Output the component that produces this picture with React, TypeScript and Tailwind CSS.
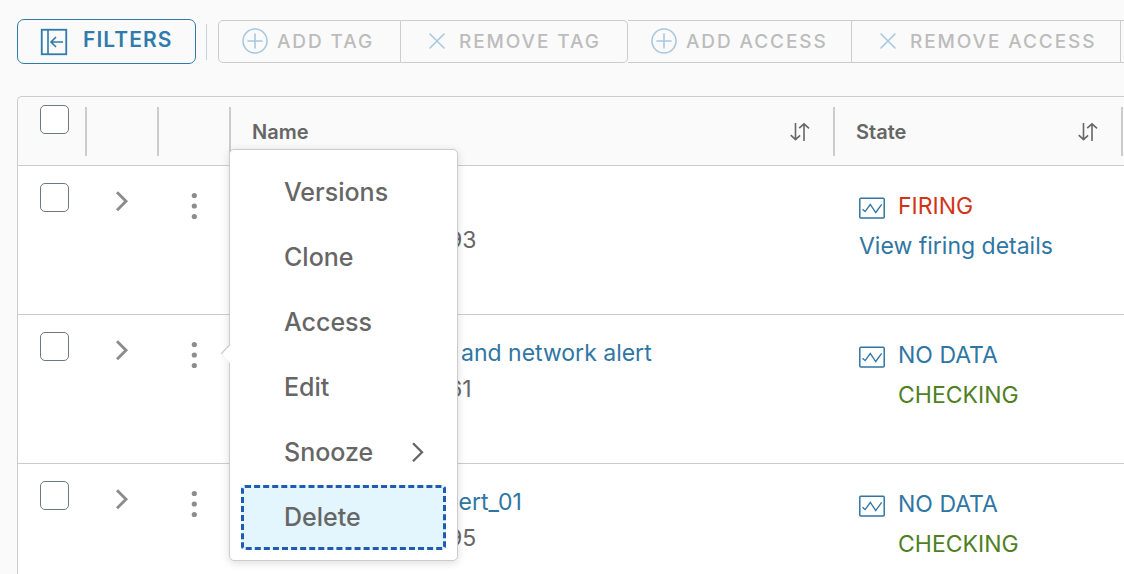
import { useState } from "react";
import type { ReactNode } from "react";

function PanelIcon() {
  return (
    <svg width="28" height="28" viewBox="0 0 28 28" fill="none" stroke="#2f7bab" aria-hidden="true">
      <rect x="1.75" y="1.75" width="24.5" height="24.5" strokeWidth="1.8" />
      <path d="M8 2v24" strokeWidth="1.6" />
      <path d="M16 9L11 14l5 5M11 14h12" strokeWidth="1.6" />
    </svg>
  );
}

function PlusCircleIcon() {
  return (
    <svg width="27" height="27" viewBox="0 0 27 27" fill="none" stroke="#a9c8df" strokeWidth="1.6" aria-hidden="true">
      <circle cx="13" cy="13" r="12" />
      <path d="M13 6v14M6 13h14" strokeLinecap="round" />
    </svg>
  );
}

function CrossIcon() {
  return (
    <svg width="27" height="27" viewBox="0 0 27 27" fill="none" stroke="#a9c8df" strokeWidth="1.6" aria-hidden="true">
      <path d="M6 6l14 14M20 6L6 20" strokeLinecap="round" />
    </svg>
  );
}

function SortIcon() {
  return (
    <svg width="20" height="20" viewBox="0 0 20 20" fill="none" stroke="#666" strokeWidth="1.6" aria-hidden="true">
      <path d="M5.5 1v17M0.8 13.2L5.5 17.6l4.6-4.2M14 19V2M9.2 6.2L14 1.8l5 4.6" />
    </svg>
  );
}

function ChevronIcon({ color, weight }: { color: string; weight: number }) {
  return (
    <svg width="14" height="22" viewBox="0 0 14 22" fill="none" stroke={color} strokeWidth={weight} aria-hidden="true">
      <path d="M2 2.2l9 9-9 9" />
    </svg>
  );
}

function KebabIcon() {
  return (
    <svg width="6" height="28" viewBox="0 0 6 28" fill="#8c8c8c" aria-hidden="true">
      <circle cx="3.3" cy="3.5" r="2.6" />
      <circle cx="3.3" cy="14" r="2.6" />
      <circle cx="3.3" cy="24.5" r="2.6" />
    </svg>
  );
}

function ChartIcon() {
  return (
    <svg width="26" height="22" viewBox="0 0 26 22" fill="none" stroke="#2f76a3" aria-hidden="true">
      <rect x="0.8" y="1.3" width="24.4" height="19.6" rx="1" strokeWidth="1.5" />
      <path d="M3.5 12.2l2.6 2.4 5.2-7.1 5.4 8 6-8.2" strokeWidth="1.3" />
    </svg>
  );
}

function ToolButton({ icon, label, className }: { icon: ReactNode; label: string; className: string }) {
  return (
    <button
      type="button"
      disabled
      className={`flex h-[43px] shrink-0 items-center border-[#ccc] pl-[23px] text-[19px] font-medium tracking-widest text-[#bcbcbc] ${className}`}
    >
      {icon}
      <span className="ml-2 pt-0.5 whitespace-nowrap">{label}</span>
    </button>
  );
}

function Check({ label }: { label: string }) {
  return (
    <input
      type="checkbox"
      aria-label={label}
      className="block size-[29px] appearance-none rounded-[5px] border border-[#6b7a82] bg-white checked:bg-[#2f7bab]"
    />
  );
}

function RowMenu() {
  const items = ["Versions", "Clone", "Access", "Edit", "Snooze", "Delete"];
  return (
    <div
      role="menu"
      className="absolute -top-[166px] left-[70px] z-10 w-[229px] rounded-[5px] border border-[#ccc] bg-white px-[11px] py-[10px] shadow-[0_2px_8px_rgba(0,0,0,0.14)]"
    >
      <svg className="absolute top-[194px] -left-[10px]" width="11" height="20" viewBox="0 0 11 20" aria-hidden="true">
        <path d="M11 0L1 10l10 10z" fill="#fff" />
        <path d="M10 0.5L1 10" stroke="#ccc" strokeWidth="1.2" />
        <path d="M1 10l9 9" stroke="#eee" strokeWidth="0.8" />
      </svg>
      {items.map((item) => (
        <button
          key={item}
          type="button"
          role="menuitem"
          className={`flex h-[65px] w-full items-center justify-between rounded-[4px] border-[3px] pr-[18px] pb-0.5 pl-10 text-[25px] font-medium text-[#666] ${
            item === "Delete" ? "border-dashed border-[#1f5bb5] bg-[#e3f6fe]" : "border-transparent"
          }`}
        >
          {item}
          {item === "Snooze" && <ChevronIcon color="#666" weight={2.3} />}
        </button>
      ))}
    </div>
  );
}

type Alert = { name?: string; nameIndent?: string; id: string; firing: boolean; menu: boolean };

const alerts: Alert[] = [
  { id: "93", firing: true, menu: false },
  { name: "and network alert", nameIndent: "pl-[230px]", id: "61", firing: false, menu: true },
  { name: "alert_01", nameIndent: "pl-[209px]", id: "95", firing: false, menu: false },
];

export default function App() {
  const [openRow] = useState(1);
  return (
    <div className="min-h-screen overflow-hidden bg-[#fafafa] pl-[17px] font-['Inter','Liberation_Sans',sans-serif] text-[#666]">
      <div className="flex items-center pt-[19px]">
        <button
          type="button"
          className="flex h-[45px] w-[179px] shrink-0 items-center rounded-[7px] border border-[#2f7bab] pl-[22px] text-[21px] font-semibold tracking-wider text-[#2f7bab]"
        >
          <PanelIcon />
          <span className="ml-[15px] pb-1">FILTERS</span>
        </button>
        <div className="mx-[10px] h-9 w-px shrink-0 bg-[#c5d2da]" />
        <div className="flex min-w-0 flex-1 pl-px">
          <ToolButton icon={<PlusCircleIcon />} label="ADD TAG" className="w-[183px] rounded-l-[5px] border" />
          <ToolButton icon={<CrossIcon />} label="REMOVE TAG" className="w-[227px] rounded-r-[5px] border border-l-0" />
          <ToolButton icon={<PlusCircleIcon />} label="ADD ACCESS" className="w-[223px] border-y" />
          <ToolButton icon={<CrossIcon />} label="REMOVE ACCESS" className="w-[270px] border" />
          <div className="h-[43px] flex-1 border-y border-[#ccc]" />
        </div>
      </div>

      <div className="mt-8 overflow-hidden rounded-tl-[5px] border-t border-l border-[#ccc]">
        <table className="w-full table-fixed border-separate border-spacing-0 text-left">
          <colgroup>
            <col className="w-[69px]" />
            <col className="w-[72px]" />
            <col className="w-[72px]" />
            <col />
            <col className="w-[289px]" />
          </colgroup>
          <thead>
            <tr>
              <th className="border-b border-[#ccc] p-0 pt-[10px] pb-[9px] align-top">
                <div className="flex h-[49px] items-start border-r-2 border-[#ccc] pl-[22px]">
                  <div className="-mt-0.5">
                    <Check label="Select all alerts" />
                  </div>
                </div>
              </th>
              <th className="border-b border-[#ccc] p-0 pt-[10px] pb-[9px]">
                <div className="h-[49px] border-r-2 border-[#ccc]" />
              </th>
              <th className="border-b border-[#ccc] p-0 pt-[10px] pb-[9px]">
                <div className="h-[49px] border-r-2 border-[#ccc]" />
              </th>
              {["Name", "State"].map((title) => (
                <th
                  key={title}
                  className={`border-b border-[#ccc] p-0 pt-[10px] pb-[9px] ${title === "State" ? "pr-px" : ""}`}
                >
                  <div className="flex h-[49px] items-center justify-between border-r-2 border-[#ccc] pr-[23px] pl-[21px] text-xl font-semibold">
                    <span>{title}</span>
                    <button type="button" aria-label={`Sort by ${title}`}>
                      <SortIcon />
                    </button>
                  </div>
                </th>
              ))}
            </tr>
          </thead>
          <tbody className="bg-white text-[23px] leading-10">
            {alerts.map((alert, index) => (
              <tr key={alert.id} className="h-[149px]">
                <td className="border-b border-[#ccc] p-0 pt-[17px] pl-[22px] align-top">
                  <Check label={`Select alert ${index + 1}`} />
                </td>
                <td className="border-b border-[#ccc] p-0 pt-6 pl-7 align-top">
                  <button type="button" aria-label="Expand row" className="block">
                    <ChevronIcon color="#8c8c8c" weight={2.9} />
                  </button>
                </td>
                <td className="relative border-b border-[#ccc] p-0 pt-[26px] pl-8 align-top">
                  <button type="button" aria-label="Row actions" className="block">
                    <KebabIcon />
                  </button>
                  {openRow === index && alert.menu && <RowMenu />}
                </td>
                <td className="border-b border-[#ccc] p-0 pt-[18px] align-top whitespace-nowrap">
                  <div className="h-9">
                    {alert.name && (
                      <a href="#alert" className={`text-[#2f76a3] ${alert.nameIndent}`}>
                        {alert.name}
                      </a>
                    )}
                  </div>
                  <div className="pl-[217px]">{alert.id}</div>
                </td>
                <td className="border-b border-[#ccc] p-0 pt-5 pl-6 align-top whitespace-nowrap">
                  <div className="flex items-center">
                    <span className="pt-1">
                      <ChartIcon />
                    </span>
                    <span className={`ml-[13px] ${alert.firing ? "text-[#d0351c]" : "text-[#2f76a3]"}`}>
                      {alert.firing ? "FIRING" : "NO DATA"}
                    </span>
                  </div>
                  {alert.firing ? (
                    <a href="#details" className="block text-[#2f76a3]">
                      View firing details
                    </a>
                  ) : (
                    <div className="pl-[39px] text-[#4f7f1f]">CHECKING</div>
                  )}
                </td>
              </tr>
            ))}
          </tbody>
        </table>
      </div>
    </div>
  );
}
